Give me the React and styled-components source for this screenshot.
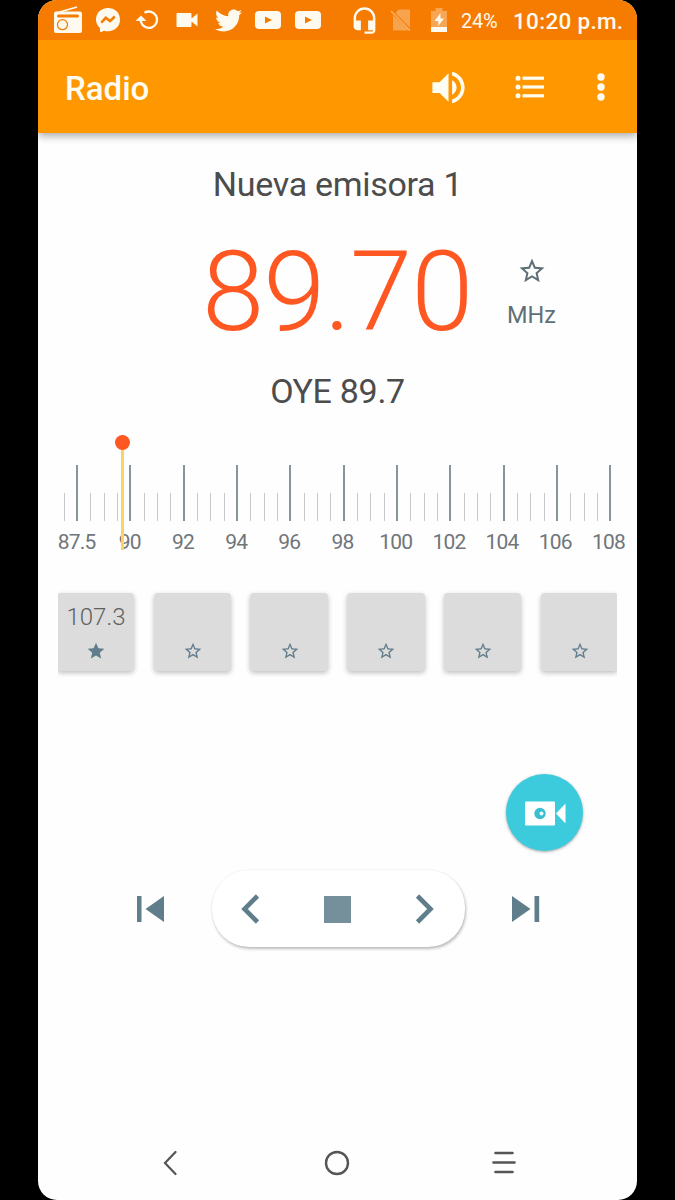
import React from 'react';
import styled, { createGlobalStyle } from 'styled-components';
import { FaTwitter } from 'react-icons/fa';
import { MdHeadsetMic, MdStar, MdStarBorder, MdVolumeUp } from 'react-icons/md';

const GlobalStyle = createGlobalStyle`
  * {
    box-sizing: border-box;
  }

  body {
    margin: 0;
    background-color: #000;
    font-family: Roboto, 'Liberation Sans', sans-serif;
  }

  svg {
    display: block;
    flex-shrink: 0;
  }
`;

const Phone = styled.div`
  display: flex;
  flex-direction: column;
  width: 599px;
  height: 1200px;
  margin-left: 38px;
  overflow: hidden;
  background-color: #fefefe;
  border-radius: 19px;
`;

const StatusBar = styled.div`
  display: flex;
  align-items: center;
  height: 40px;
  padding-left: 10px;
  background-color: #f57c00;
  color: #fffaf0;
  white-space: nowrap;
`;

const StatusGroup = styled.div`
  display: flex;
  align-items: center;
  margin-left: ${(props) => props.$left || 0}px;
`;

const StatusSlot = styled.span`
  display: flex;
  align-items: center;
  justify-content: center;
  width: ${(props) => props.$width}px;
  height: 40px;
`;

const Battery = styled.span`
  width: 38px;
  margin-left: 2px;
  padding-top: 2px;
  font-size: 20px;
  letter-spacing: -0.3px;
  line-height: 40px;
`;

const Clock = styled.span`
  margin-left: 14px;
  padding-top: 2px;
  font-size: 22.5px;
  font-weight: 500;
  letter-spacing: 0.3px;
  line-height: 42px;
`;

const StyledHeader = styled.header`
  display: flex;
  align-items: center;
  height: 93px;
  padding: 1px 0 0 27px;
  background-color: #ff9800;
  box-shadow: 0 2px 9px rgba(0, 0, 0, 0.4);
  clip-path: inset(0 0 -14px 0);
  color: #fffcf2;
  z-index: 1;
`;

const Title = styled.h1`
  width: 365px;
  margin: 4px 0 0;
  font-size: 33px;
  font-weight: 500;
  line-height: 40px;
`;

const HeaderButton = styled.span`
  display: flex;
  justify-content: center;
  width: ${(props) => props.$width}px;
`;

const StationName = styled.div`
  margin-top: ${(props) => props.$top}px;
  color: #4c4c4c;
  font-size: 34px;
  letter-spacing: -0.3px;
  line-height: 40px;
  text-align: center;
`;

const Tuner = styled.div`
  display: grid;
  grid-template-columns: 275px 72px;
  column-gap: 18px;
  height: 130px;
  margin-top: 23px;
  padding-left: 164px;
`;

const Frequency = styled.div`
  color: #ff5722;
  font-size: 112px;
  font-weight: 300;
  letter-spacing: -1px;
  line-height: 130px;
`;

const Unit = styled.div`
  display: flex;
  flex-direction: column;
  align-items: center;
  padding: 29px 0 0 1px;
  color: #607078;
  font-size: 23.5px;
  line-height: 28px;

  span {
    margin-top: 15px;
  }
`;

const Dial = styled.div`
  position: relative;
  height: 128px;
  margin-top: 23px;
  padding-top: 31px;
`;

const Ticks = styled.div`
  display: flex;
  height: 56px;
  padding-left: 25px;
`;

const TickGroup = styled.div`
  display: grid;
  flex-shrink: 0;
  grid-template-columns: repeat(4, 1fr);
  align-items: end;
  width: 53.35px;
`;

const Tick = styled.span`
  width: ${(props) => (props.$major ? 2 : 1)}px;
  height: ${(props) => (props.$major ? 56 : 28)}px;
  margin-left: ${(props) => (props.$major ? 0 : 1)}px;
  background-color: ${(props) => (props.$major ? '#87949a' : '#c6c9cb')};
`;

const LeadTick = styled.div`
  display: flex;
  flex-shrink: 0;
  align-items: flex-end;
  width: 13px;
`;

const Labels = styled.div`
  display: grid;
  grid-template-columns: repeat(11, 53.2px);
  margin: 9px 0 0 12px;
  color: #70757a;
  font-size: 21px;
  letter-spacing: -0.8px;
  line-height: 24px;
  text-align: center;
`;

const Needle = styled.div`
  position: absolute;
  top: 1px;
  left: 77px;
  width: 15px;
  height: 115px;
  background: linear-gradient(#f7d564, #f7d564) center / 3px 100% no-repeat;

  &::before {
    content: '';
    display: block;
    width: 15px;
    height: 15px;
    background-color: #ff5722;
    border-radius: 50%;
  }
`;

const Presets = styled.div`
  display: flex;
  gap: 19.3px;
  width: 559px;
  height: 94px;
  margin: 23px 0 0 20px;
  padding-top: 8px;
  overflow: hidden;

  & > :first-child {
    margin-left: -1.3px;
  }
`;

const Preset = styled.div`
  display: flex;
  flex: 0 0 77.5px;
  flex-direction: column;
  align-items: center;
  height: 78px;
  padding: 9px 0 0 1px;
  background-color: #dcdcdc;
  border-radius: 4px;
  box-shadow: 0 2px 5px rgba(0, 0, 0, 0.25);
  color: #607d8b;
`;

const PresetLabel = styled.span`
  height: 39px;
  color: #606060;
  font-size: 24px;
  font-weight: 300;
  line-height: 30px;
`;

const FabRow = styled.div`
  display: flex;
  justify-content: flex-end;
  margin-top: 95px;
  padding-right: 54px;
`;

const Fab = styled.div`
  display: flex;
  align-items: center;
  justify-content: center;
  width: 77px;
  height: 77px;
  padding: 2px 0 0 1px;
  background-color: #3bcbdc;
  border-radius: 50%;
  box-shadow: 0 1px 3px rgba(0, 0, 0, 0.35);
`;

const Controls = styled.div`
  display: flex;
  align-items: center;
  justify-content: space-between;
  height: 78px;
  margin: 18px 97px 0 98px;
  color: #607d8b;

  & > svg {
    margin-top: 2px;
  }
`;

const Pill = styled.div`
  display: flex;
  align-items: center;
  justify-content: space-between;
  width: 253px;
  height: 77px;
  padding: 2px 30px 0 28px;
  background-color: #fff;
  border-radius: 37px;
  box-shadow: 1px 2px 3px rgba(0, 0, 0, 0.25), 0 0 2px rgba(0, 0, 0, 0.08);
`;

const Stop = styled.span`
  width: 27px;
  height: 27px;
  background-color: #758f9b;
`;

const NavBar = styled.nav`
  display: grid;
  grid-template-columns: repeat(3, 167px);
  justify-items: center;
  align-items: center;
  height: 74px;
  margin-top: auto;
  padding-left: 48px;
`;

const stations = ['87.5', '90', '92', '94', '96', '98', '100', '102', '104', '106', '108'];
const presets = ['107.3', '', '', '', '', ''];

const RadioIcon = () => (
  <svg width="30" height="28" viewBox="0 0 30 28">
    <path d="M5 6.5L24 1" stroke="currentColor" strokeWidth="1.7" />
    <path
      fill="currentColor"
      fillRule="evenodd"
      d="M3 5.5h24a2 2 0 0 1 2 2V25a2 2 0 0 1-2 2H3a2 2 0 0 1-2-2V7.5a2 2 0 0 1 2-2zM5.5 8.5a1.4 1.4 0 0 0 0 3h19a1.4 1.4 0 0 0 0-3z"
    />
    <circle cx="9.5" cy="18.7" r="5" fill="none" stroke="#f57c00" strokeWidth="1.3" />
  </svg>
);

const MessengerIcon = () => (
  <svg width="26" height="26" viewBox="0 0 26 26">
    <path
      fill="currentColor"
      d="M13 1C6 1 1 6 1 12.6c0 3.6 1.5 6.5 4 8.5v3.2c0 .6.6 1 1.2.7l2.8-1.3c1.2.4 2.6.6 4 .6 7 0 12-5 12-11.7S20 1 13 1z"
    />
    <path d="M6.3 15.6l4.5-4.8 4.2 3.3 4.8-4.6" fill="none" stroke="#f57c00" strokeWidth="2.6" />
  </svg>
);

const RotateIcon = () => (
  <svg width="26" height="24" viewBox="0 0 26 24">
    <path d="M10.5 4.8A8.2 8.2 0 1 1 7 14V10" fill="none" stroke="currentColor" strokeWidth="2.3" />
    <path d="M1.5 13L7 7.5l5.500 5.500z" fill="currentColor" />
  </svg>
);

const CamcorderIcon = () => (
  <svg width="24" height="18" viewBox="0 0 24 18">
    <path d="M2.5 2h13a1 1 0 0 1 1 1v4.5l6-5v13l-6-5V15a1 1 0 0 1-1 1h-13a1 1 0 0 1-1-1V3a1 1 0 0 1 1-1z" fill="currentColor" />
  </svg>
);

const VideoIcon = () => (
  <svg width="28" height="20" viewBox="0 0 28 20">
    <rect x="1" y="1" width="26" height="18" rx="4" fill="currentColor" />
    <path d="M11 6.5l7 3.5-7 3.5z" fill="#f57c00" />
  </svg>
);

const NoSimIcon = () => (
  <svg width="24" height="24" viewBox="0 0 24 24">
    <path d="M9.5 1.5H21V20L6.5 5zM4 7v15.5h16z" fill="#fff" opacity=".3" />
    <path d="M2 3l19 19.5" stroke="#fff" strokeWidth="1.6" opacity=".38" />
  </svg>
);

const BatteryIcon = () => (
  <svg width="18" height="26" viewBox="0 0 18 26">
    <path d="M5.5 1h7v3H17v16H1V4h4.5z" fill="#fff" opacity=".32" />
    <path d="M1 20h16v5H1zM10.5 6l-6 8h3.8v5l5.7-7.5h-3.5z" fill="currentColor" />
  </svg>
);

const ListIcon = () => (
  <svg width="30" height="24" viewBox="0 0 30 24" fill="currentColor">
    {[3.2, 12, 20.8].map((y) => (
      <g key={y}>
        <circle cx="3" cy={y} r="2.5" />
        <rect x="7.5" y={y - 1.6} width="21.5" height="3.2" />
      </g>
    ))}
  </svg>
);

const MoreIcon = () => (
  <svg width="8" height="28" viewBox="0 0 8 28" fill="currentColor">
    <circle cx="4" cy="4" r="3.7" />
    <circle cx="4" cy="14" r="3.7" />
    <circle cx="4" cy="24" r="3.7" />
  </svg>
);

const RecordIcon = () => (
  <svg width="41" height="25" viewBox="0 0 41 25">
    <path d="M1 .5h28a1 1 0 0 1 1 1v22a1 1 0 0 1-1 1H1a1 1 0 0 1-1-1v-22a1 1 0 0 1 1-1zM31 12.5l9.5-10v20z" fill="#fff" />
    <circle cx="15" cy="12.5" r="5.7" fill="#3bbfd0" />
    <circle cx="16.5" cy="12.5" r="2" fill="#e8fbfd" />
  </svg>
);

const SkipIcon = ({ next }) => (
  <svg width="30" height="28" viewBox="0 0 30 28" fill="currentColor">
    <path d={next ? 'M2 1v26l18.5-13zM24.5 1h4.7v26h-4.7z' : 'M1 1h4.5v26H1zM28 1v26L9.5 14z'} />
  </svg>
);

const SeekIcon = ({ next }) => (
  <svg width="20" height="30" viewBox="0 0 20 30" fill="none" stroke="currentColor" strokeWidth="4.6">
    <path d={next ? 'M2.5 2l13 13-13 13' : 'M17.5 2l-13 13 13 13'} />
  </svg>
);

const Header = () => (
  <StyledHeader>
    <Title>Radio</Title>
    <HeaderButton $width={36}>
      <MdVolumeUp size={43} />
    </HeaderButton>
    <HeaderButton $width={128}>
      <ListIcon />
    </HeaderButton>
    <HeaderButton $width={14}>
      <MoreIcon />
    </HeaderButton>
  </StyledHeader>
);

const Status = () => (
  <StatusBar>
    <StatusGroup>
      <StatusSlot $width={40}><RadioIcon /></StatusSlot>
      <StatusSlot $width={40}><MessengerIcon /></StatusSlot>
      <StatusSlot $width={37}><RotateIcon /></StatusSlot>
      <StatusSlot $width={43}><CamcorderIcon /></StatusSlot>
      <StatusSlot $width={40}><FaTwitter size={27} /></StatusSlot>
      <StatusSlot $width={40}><VideoIcon /></StatusSlot>
      <StatusSlot $width={40}><VideoIcon /></StatusSlot>
    </StatusGroup>
    <StatusGroup $left={17}>
      <StatusSlot $width={38}><MdHeadsetMic size={29} /></StatusSlot>
      <StatusSlot $width={36}><NoSimIcon /></StatusSlot>
      <StatusSlot $width={40}><BatteryIcon /></StatusSlot>
    </StatusGroup>
    <Battery>24%</Battery>
    <Clock>10:20 p.m.</Clock>
  </StatusBar>
);

const FrequencyDial = () => (
  <Dial>
    <Ticks>
      <LeadTick>
        <Tick />
      </LeadTick>
      {stations.map((station, i) => (
        <TickGroup key={station}>
          <Tick $major />
          {i < stations.length - 1 && (
            <>
              <Tick />
              <Tick />
              <Tick />
            </>
          )}
        </TickGroup>
      ))}
    </Ticks>
    <Labels>
      {stations.map((station) => (
        <span key={station}>{station}</span>
      ))}
    </Labels>
    <Needle />
  </Dial>
);

const App = () => (
  <>
    <GlobalStyle />
    <Phone>
      <Status />
      <Header />
      <StationName $top={31}>Nueva emisora 1</StationName>
      <Tuner>
        <Frequency>89.70</Frequency>
        <Unit>
          <MdStarBorder size={30} />
          <span>MHz</span>
        </Unit>
      </Tuner>
      <StationName $top={14}>OYE 89.7</StationName>
      <FrequencyDial />
      <Presets>
        {presets.map((preset, i) => (
          <Preset key={i}>
            <PresetLabel>{preset}</PresetLabel>
            {preset ? <MdStar size={20} /> : <MdStarBorder size={20} />}
          </Preset>
        ))}
      </Presets>
      <FabRow>
        <Fab>
          <RecordIcon />
        </Fab>
      </FabRow>
      <Controls>
        <SkipIcon />
        <Pill>
          <SeekIcon />
          <Stop />
          <SeekIcon next />
        </Pill>
        <SkipIcon next />
      </Controls>
      <NavBar>
        <svg width="14" height="26" viewBox="0 0 14 26">
          <path d="M12.5 2L2 13l10.500 11" fill="none" stroke="#555" strokeWidth="2.2" strokeLinecap="round" />
        </svg>
        <svg width="26" height="26" viewBox="0 0 26 26">
          <circle cx="13" cy="13" r="11" fill="none" stroke="#555" strokeWidth="2.4" />
        </svg>
        <svg width="24" height="24" viewBox="0 0 24 24">
          <path d="M3.5 2h17M1.5 11.5h21M3.5 21h17" stroke="#555" strokeWidth="2.6" strokeLinecap="round" />
        </svg>
      </NavBar>
    </Phone>
  </>
);

export default App;
